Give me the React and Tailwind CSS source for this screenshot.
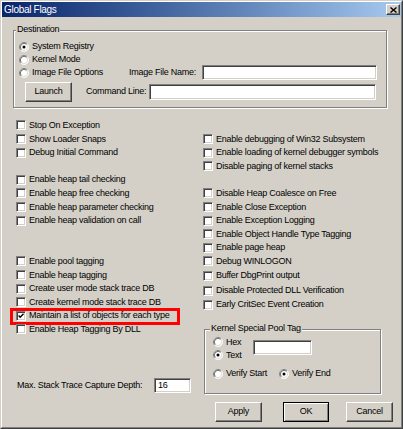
const FONT = { fontFamily: "'Liberation Sans', Arial, sans-serif" };

function Check({ checked }) {
  return (
    <span className="relative block w-[10px] h-[10px] shrink-0 bg-white border border-t-[#808080] border-l-[#808080] border-r-white border-b-white shadow-[inset_1px_1px_0_#404040,inset_-1px_-1px_0_#d4d0c8]">
      {checked && (
        <svg className="absolute left-[1px] top-[1px]" width="6" height="6" viewBox="0 0 6 6">
          <path d="M0.6 2.6 L2.2 4.3 L5.5 0.8" fill="none" stroke="#000" strokeWidth="1.4" />
        </svg>
      )}
    </span>
  );
}

function Radio({ checked }) {
  return (
    <svg className="block shrink-0" width="10" height="10" viewBox="0 0 12 12">
      <circle cx="6" cy="6" r="5.5" fill="#fff" />
      <path d="M2.11 9.89 A5.5 5.5 0 0 1 9.89 2.11" fill="none" stroke="#808080" strokeWidth="1" />
      <path d="M9.89 2.11 A5.5 5.5 0 0 1 2.11 9.89" fill="none" stroke="#ffffff" strokeWidth="1" />
      <path d="M2.82 9.18 A4.5 4.5 0 0 1 9.18 2.82" fill="none" stroke="#404040" strokeWidth="1" />
      <path d="M9.18 2.82 A4.5 4.5 0 0 1 2.82 9.18" fill="none" stroke="#d4d0c8" strokeWidth="1" />
      {checked && <circle cx="6" cy="6" r="1.8" fill="#000" />}
    </svg>
  );
}

function RadioLabel({ checked, children, className = "" }) {
  return (
    <div className={"flex items-center gap-[3px] " + className}>
      <Radio checked={checked} />
      <span className="whitespace-nowrap">{children}</span>
    </div>
  );
}

function Input({ className = "", children }) {
  return (
    <div className={"bg-white border border-t-[#808080] border-l-[#808080] border-r-white border-b-white shadow-[inset_1px_1px_0_#404040,inset_-1px_-1px_0_#d4d0c8] flex items-center pl-[3px] " + className}>
      {children}
    </div>
  );
}

function Button({ children, className = "", def = false }) {
  return (
    <div
      className={
        "flex items-center justify-center h-[20px] bg-[#d4d0c8] " +
        (def
          ? "border border-black shadow-[inset_1px_1px_0_#fff,inset_-1px_-1px_0_#808080] "
          : "border border-t-white border-l-white border-r-[#404040] border-b-[#404040] shadow-[inset_-1px_-1px_0_#808080] ") +
        className
      }
    >
      {children}
    </div>
  );
}

function Row({ label, checked = false, highlight = false, tall = false }) {
  const h = tall ? "h-[14.9px]" : "h-[13.6px]";
  if (!label) return <div className={h} />;
  return (
    <div className={"relative flex items-center gap-[3px] " + h}>
      <Check checked={checked} />
      <span className="whitespace-nowrap leading-none">{label}</span>
      {highlight && (
        <div className="absolute -left-[6px] -top-[1px] w-[170px] h-[17px] border-[3px] border-[#ff0000]" />
      )}
    </div>
  );
}

const leftRows = [
  "Stop On Exception",
  "Show Loader Snaps",
  "Debug Initial Command",
  null,
  "Enable heap tail checking",
  "Enable heap free checking",
  "Enable heap parameter checking",
  "Enable heap validation on call",
  null,
  null,
  "Enable pool tagging",
  "Enable heap tagging",
  "Create user mode stack trace DB",
  "Create kernel mode stack trace DB",
  "Maintain a list of objects for each type",
  "Enable Heap Tagging By DLL",
];

const rightRows = [
  null,
  "Enable debugging of Win32 Subsystem",
  "Enable loading of kernel debugger symbols",
  "Disable paging of kernel stacks",
  null,
  "Disable Heap Coalesce on Free",
  "Enable Close Exception",
  "Enable Exception Logging",
  "Enable Object Handle Type Tagging",
  "Enable page heap",
  "Debug WINLOGON",
  "Buffer DbgPrint output",
  "Disable Protected DLL Verification",
  "Early CritSec Event Creation",
];

export default function App() {
  return (
    <div
      className="w-[403px] h-[429px] bg-[#d4d0c8] border border-t-[#d4d0c8] border-l-[#d4d0c8] border-r-[#404040] border-b-[#404040] text-black text-[9px] tracking-[-0.25px] overflow-hidden"
      style={FONT}
    >
      <div className="w-full h-full border border-t-white border-l-white border-r-[#808080] border-b-[#808080] flex flex-col">
        {/* Title bar */}
        <div className="h-[15px] shrink-0 flex items-center justify-between bg-gradient-to-r from-[#0a246a] to-[#a6caf0] pl-[2px] pr-[1px]">
          <span className="text-white text-[10px] tracking-[-0.3px] leading-none">Global Flags</span>
          <div className="w-[14px] h-[11px] bg-[#d4d0c8] border border-t-white border-l-white border-r-[#404040] border-b-[#404040] shadow-[inset_-1px_-1px_0_#808080] flex items-center justify-center">
            <svg width="7" height="6" viewBox="0 0 7 6">
              <path d="M0.5 0.5 L6.5 5.5 M6.5 0.5 L0.5 5.5" stroke="#000" strokeWidth="1.4" />
            </svg>
          </div>
        </div>

        {/* Destination group */}
        <div className="relative mt-[13px] ml-[11px] w-[374px] h-[78px] shrink-0 border border-[#808080] shadow-[inset_1px_1px_0_#fff,1px_1px_0_#fff] pt-[9px]">
          <span className="absolute -top-[7px] left-[2px] px-[1px] bg-[#d4d0c8] leading-[11px]">Destination</span>
          <div className="pl-[5px] flex flex-col">
            <RadioLabel checked className="h-[13px]">System Registry</RadioLabel>
            <RadioLabel className="h-[13px]">Kernel Mode</RadioLabel>
            <div className="flex items-center h-[13px]">
              <RadioLabel className="w-[110px]">Image File Options</RadioLabel>
              <span className="w-[73px] whitespace-nowrap">Image File Name:</span>
              <Input className="w-[175px] h-[15px]" />
            </div>
          </div>
          <div className="flex items-center mt-[3px] pl-[11px]">
            <Button className="w-[47px]">Launch</Button>
            <span className="ml-[14px] w-[63px] whitespace-nowrap">Command Line:</span>
            <Input className="w-[227px] h-[16px]" />
          </div>
        </div>

        {/* Flags area */}
        <div className="flex mt-[10.7px] shrink-0">
          <div className="ml-[14px] w-[187px] flex flex-col">
            {leftRows.map((l, i) => (
              <Row key={i} label={l} checked={i === 14} highlight={i === 14} />
            ))}
            <div className="flex items-center h-[15px] mt-[41.7px] pl-[1px]">
              <span className="w-[137px] whitespace-nowrap">Max. Stack Trace Capture Depth:</span>
              <Input className="w-[37px] h-[15px]">16</Input>
            </div>
          </div>
          <div className="w-[185px] flex flex-col">
            {rightRows.map((l, i) => (
              <Row key={i} label={l} tall={i === 11 || i === 12} />
            ))}
            <div className="relative mt-[17.4px] ml-[1px] w-[177px] h-[65px] border border-[#808080] shadow-[inset_1px_1px_0_#fff,1px_1px_0_#fff]">
              <span className="absolute -top-[7px] left-[5px] px-[1px] bg-[#d4d0c8] leading-[11px] whitespace-nowrap">Kernel Special Pool Tag</span>
              <div className="flex">
                <div className="w-[48px] pl-[8px] pt-[6px] flex flex-col">
                  <RadioLabel className="h-[13px]">Hex</RadioLabel>
                  <RadioLabel checked className="h-[13px]">Text</RadioLabel>
                </div>
                <Input className="mt-[10px] w-[59px] h-[15px]" />
              </div>
              <div className="flex items-center h-[13px] mt-[5.5px] pl-[8px]">
                <RadioLabel className="w-[66px]">Verify Start</RadioLabel>
                <RadioLabel checked>Verify End</RadioLabel>
              </div>
            </div>
          </div>
        </div>

        {/* Buttons */}
        <div className="flex mt-[8px] ml-[213px]">
          <Button className="w-[47px]">Apply</Button>
          <Button def className="ml-[21px] w-[46px]">OK</Button>
          <Button className="ml-[17px] w-[47px]">Cancel</Button>
        </div>
      </div>
    </div>
  );
}
